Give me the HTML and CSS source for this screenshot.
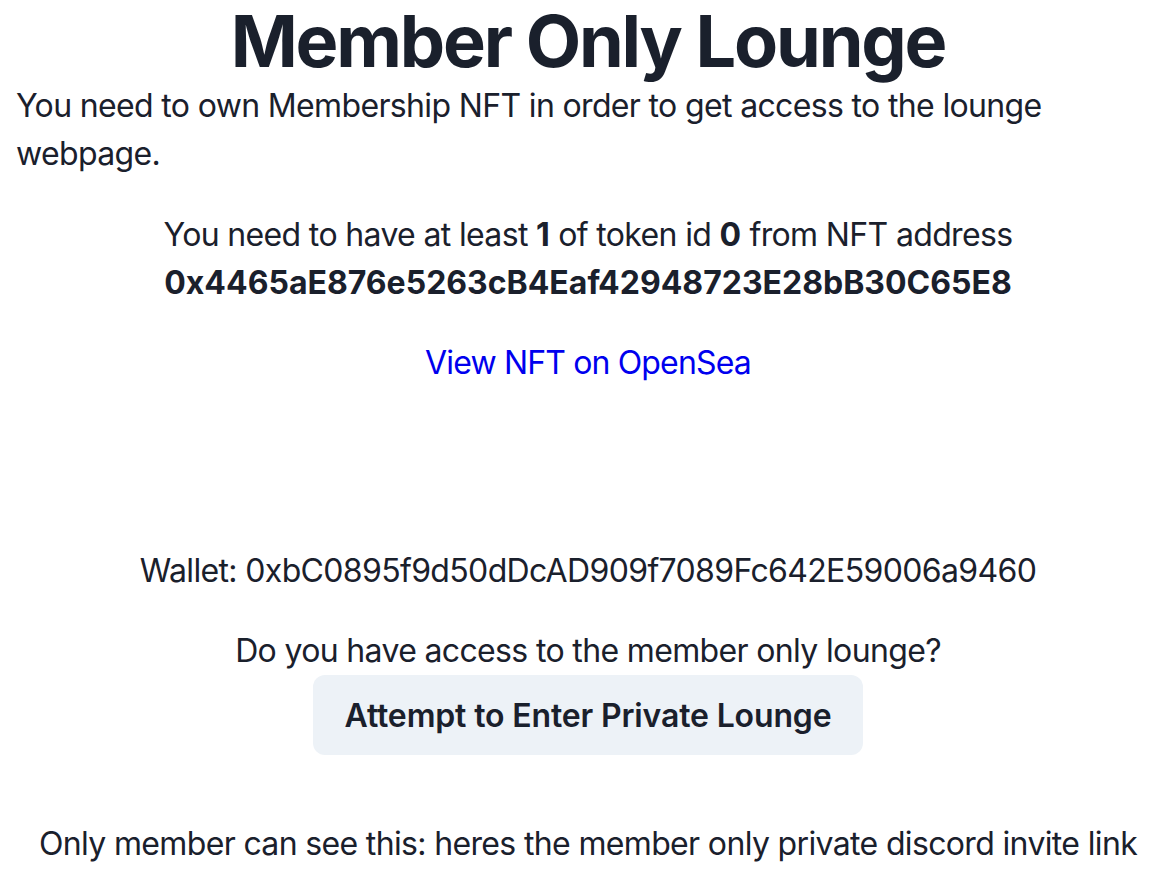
FILE: index.html
```html
<!DOCTYPE html>
<html lang="en">
<head>
  <meta charset="UTF-8">
  <meta name="viewport" content="width=device-width, initial-scale=1.0">
  <title>Member Only Lounge</title>
  <link rel="stylesheet" href="styles.css">
</head>
<body>
  <div class="page">
    <h1 class="title">Member Only Lounge</h1>
    <p class="intro">You need to own Membership NFT in order to get access to the lounge webpage.</p>

    <div class="requirement">
      <p>You need to have at least <b>1</b> of token id <b>0</b> from NFT address</p>
      <p><b>0x4465aE876e5263cB4Eaf42948723E28bB30C65E8</b></p>
    </div>

    <a class="opensea" href="#">View NFT on OpenSea</a>

    <p class="wallet">Wallet: 0xbC0895f9d50dDcAD909f7089Fc642E59006a9460</p>

    <p class="question">Do you have access to the member only lounge?</p>
    <button class="button enter">Attempt to Enter Private Lounge</button>

    <p class="secret">Only member can see this: heres the member only private discord invite link</p>
  </div>
</body>
</html>
```

FILE: styles.css
```css
html,
body {
  margin: 0;
  overflow-x: hidden;
}

body {
  background: #ffffff;
  font-family: 'Inter', 'Noto Sans', sans-serif;
  font-size: 32px;
  line-height: 48px;
  letter-spacing: -0.65px;
  color: #1a202c;
}

.page {
  display: flex;
  flex-direction: column;
  align-items: center;
  text-align: center;
  width: 1144px;
  margin-left: 16px;
}

p {
  margin: 0;
}

.title {
  margin: 0;
  font-size: 72px;
  line-height: 82px;
  font-weight: 700;
  letter-spacing: -2.2px;
}

.intro {
  align-self: stretch;
  text-align: left;
}

.requirement {
  margin-top: 33px;
}

.requirement b {
  font-weight: 700;
  letter-spacing: 0;
}

.opensea {
  margin-top: 32px;
  color: #0000ee;
  text-decoration: none;
  letter-spacing: -0.85px;
}

.wallet {
  margin-top: 160px;
}

.question {
  margin-top: 32px;
}

.button {
  height: 80px;
  padding: 0 32px;
  border: none;
  border-radius: 12px;
  font-family: inherit;
  font-size: 32px;
  font-weight: 600;
  letter-spacing: -0.15px;
  color: #1a202c;
  cursor: pointer;
}

.button.enter {
  background: #edf2f7;
}

.secret {
  margin-top: 65px;
  white-space: nowrap;
}
```
